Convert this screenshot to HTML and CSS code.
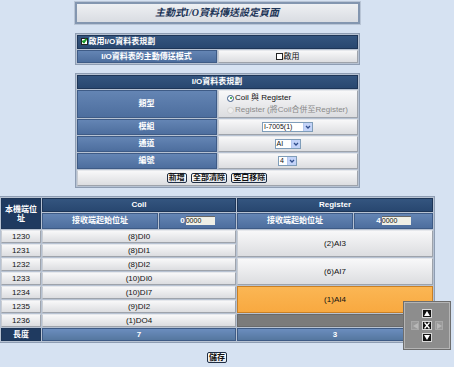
FILE: index.html
```html
<!DOCTYPE html>
<html>
<head>
<meta charset="utf-8">
<link rel="stylesheet" href="styles.css">
</head>
<body>
<div class="page">
  <div class="title">主動式I/O資料傳送設定頁面</div>

  <table class="box t1">
    <tr class="r-hd"><td class="hd left" colspan="2"><span class="cb checked"></span>啟用I/O資料表規劃</td></tr>
    <tr class="r-mode"><td class="lab w1">I/O資料表的主動傳送模式</td><td class="val"><span class="cb"></span>啟用</td></tr>
  </table>

  <table class="box t2">
    <tr class="r-hd"><td class="hd" colspan="2">I/O資料表規劃</td></tr>
    <tr class="r-type"><td class="lab w1">類型</td>
      <td class="val">
        <div class="radios">
          <div class="radio-line"><span class="rb on"></span>Coil 與 Register</div>
          <div class="radio-line dis"><span class="rb dis"></span>Register (將Coil合併至Register)</div>
        </div>
      </td></tr>
    <tr class="r-sel"><td class="lab">模組</td><td class="val"><span class="sel s1">I-7005(1)<span class="arr"></span></span></td></tr>
    <tr class="r-sel"><td class="lab">通道</td><td class="val"><span class="sel s2">AI<span class="arr"></span></span></td></tr>
    <tr class="r-sel"><td class="lab">編號</td><td class="val"><span class="sel s3">4<span class="arr"></span></span></td></tr>
    <tr class="r-sel"><td class="val" colspan="2"><span class="btn">新增</span> <span class="btn">全部清除</span> <span class="btn">空白移除</span></td></tr>
  </table>

  <table class="box t3">
    <colgroup><col style="width:40px"><col style="width:116px"><col style="width:77px"><col style="width:116px"><col style="width:79px"></colgroup>
    <tr class="h1"><td class="hd dk" rowspan="2">本機端位址</td><td class="hd" colspan="2">Coil</td><td class="hd" colspan="2">Register</td></tr>
    <tr class="h2"><td class="lab">接收端起始位址</td><td class="lab">0<span class="inp">0000</span></td><td class="lab">接收端起始位址</td><td class="lab">4<span class="inp">0000</span></td></tr>
    <tr class="d"><td class="val">1230</td><td class="val" colspan="2">(8)DI0</td><td class="val" colspan="2" rowspan="2">(2)AI3</td></tr>
    <tr class="d"><td class="val">1231</td><td class="val" colspan="2">(8)DI1</td></tr>
    <tr class="d"><td class="val">1232</td><td class="val" colspan="2">(8)DI2</td><td class="val" colspan="2" rowspan="2">(6)AI7</td></tr>
    <tr class="d"><td class="val">1233</td><td class="val" colspan="2">(10)DI0</td></tr>
    <tr class="d"><td class="val">1234</td><td class="val" colspan="2">(10)DI7</td><td class="val orange" colspan="2" rowspan="2">(1)AI4</td></tr>
    <tr class="d"><td class="val">1235</td><td class="val" colspan="2">(9)DI2</td></tr>
    <tr class="d"><td class="val">1236</td><td class="val" colspan="2">(1)DO4</td><td class="val gray" colspan="2"></td></tr>
    <tr class="d"><td class="hd dk">長度</td><td class="lab len" colspan="2">7</td><td class="lab len" colspan="2">3</td></tr>
  </table>

  <div class="save"><span class="btn">儲存</span></div>
</div>

<div class="nav">
  <div class="nrow"><span class="nb"><svg width="6" height="5" viewBox="0 0 6 5"><path d="M3 0L6 5H0Z" fill="#fff"/></svg></span></div>
  <div class="nrow">
    <span class="nb off"><svg width="5" height="6" viewBox="0 0 5 6"><path d="M0 3L5 0V6Z" fill="#b8b8b8"/></svg></span>
    <span class="nb"><svg width="6" height="7" viewBox="0 0 6 7"><path d="M0.5 0.5L5.5 6.5M5.5 0.5L0.5 6.5" stroke="#fff" stroke-width="1.4"/></svg></span>
    <span class="nb off"><svg width="5" height="6" viewBox="0 0 5 6"><path d="M5 3L0 0V6Z" fill="#b8b8b8"/></svg></span>
  </div>
  <div class="nrow"><span class="nb"><svg width="6" height="5" viewBox="0 0 6 5"><path d="M3 5L6 0H0Z" fill="#fff"/></svg></span></div>
</div>
</body>
</html>
```

FILE: styles.css
```css
html, body { margin: 0; padding: 0; }
body {
  background: #d6e2f2;
  font-family: "Liberation Sans", "Noto Sans CJK TC", Arial, sans-serif;
  font-size: 8px;
  color: #111;
  width: 454px;
  height: 367px;
  overflow: hidden;
  position: relative;
}
.page {
  width: 434px;
  padding-top: 2px;
  display: flex;
  flex-direction: column;
  align-items: center;
}
.title {
  box-sizing: border-box;
  width: 285px;
  height: 22px;
  border: 2px solid #8396b0;
  outline: 1px solid #b9c5d6;
  background: linear-gradient(#eef0f3, #d9dce2);
  color: #1e3658;
  font-family: "Liberation Serif", "Noto Sans CJK TC", serif;
  font-style: italic;
  font-weight: bold;
  font-size: 10px;
  line-height: 18px;
  text-align: center;
}
.box {
  border-collapse: separate;
  border-spacing: 1px;
  background: #b7c2d2;
  border: 1px solid #8e9db3;
  padding: 0;
  table-layout: fixed;
}
.box td {
  box-sizing: border-box;
  padding: 0;
  text-align: center;
  vertical-align: middle;
  white-space: nowrap;
  line-height: 10px;
  font-size: 8px;
}
.t1 { width: 285px; margin-top: 9px; }
.t2 { width: 285px; margin-top: 8px; }
.t3 { width: 428px; margin-top: 8px; }
.hd {
  background: linear-gradient(#34557f, #284770);
  color: #fff;
  font-weight: bold;
  border: 1px solid #1d3557;
}
.hd.left { text-align: left !important; padding-left: 3px !important; }
.hd.dk { background: #1f3a60; }
.lab {
  background: linear-gradient(#6485b4, #4d6e9e);
  color: #fff;
  font-weight: bold;
  border: 1px solid #3e5b86;
}
.w1 { width: 114px; }
.val {
  background: linear-gradient(#f8f8f9, #dcdde0);
  border: 1px solid #9ea3ab;
  border-top-color: #e6e8ec;
  border-left-color: #c8ccd2;
  color: #111;
}
.r-hd td { height: 14px; }
.r-mode td { height: 13px; }
.r-type td { height: 28px; }
.r-sel td { height: 16px; }
.cb {
  display: inline-block;
  box-sizing: border-box;
  width: 7px;
  height: 7px;
  border: 1px solid #222;
  background: #fff;
  vertical-align: -1px;
  margin-right: 1px;
  position: relative;
}
.cb.checked::after {
  content: "";
  position: absolute;
  left: 1px; top: -1px;
  width: 1px; height: 3px;
  border: solid #1a9a2a;
  border-width: 0 2px 2px 0;
  transform: rotate(40deg);
}
.radios { display: inline-flex; flex-direction: column; align-items: flex-start; gap: 2px; }
.radio-line { display: flex; align-items: center; line-height: 10px; }
.radio-line.dis { color: #8a8a8a; }
.rb {
  display: inline-block;
  box-sizing: border-box;
  width: 7px; height: 7px;
  border-radius: 50%;
  border: 1px solid #3a5a88;
  background: #fff;
  margin-right: 1px;
  position: relative;
}
.rb.on::after {
  content: ""; position: absolute; left: 1.5px; top: 1.5px; width: 2px; height: 2px; border-radius: 50%; background: #1f9a2a;
}
.rb.dis { border-color: #d4d4d4; background: #eeeeee; }
.sel {
  display: inline-flex;
  align-items: center;
  justify-content: space-between;
  box-sizing: border-box;
  height: 10px;
  border: 1px solid #7f9db9;
  background: #fff;
  font-size: 7px;
  line-height: 8px;
  padding-left: 1px;
  vertical-align: middle;
}
.s1 { width: 51px; }
.s2 { width: 26px; }
.s3 { width: 19px; }
.arr {
  width: 8px; height: 8px;
  background: #c3d3f8 url("data:image/svg+xml,%3Csvg xmlns='http://www.w3.org/2000/svg' width='8' height='8'%3E%3Cpath d='M2 3L4 5L6 3' stroke='%23304d8c' stroke-width='1.3' fill='none'/%3E%3C/svg%3E") center no-repeat;
  border-left: 1px solid #b5c8ef;
}
.btn {
  display: inline-block;
  border: 1px solid #1e2d44;
  border-radius: 2px;
  background: linear-gradient(#ffffff, #e6e9ee);
  font-size: 8px;
  line-height: 8px;
  padding: 0 1px;
  margin: 0 1px;
  color: #111;
  font-weight: bold;
  vertical-align: middle;
}
.t3 .h1 td { height: 14px; }
.t3 .h2 td { height: 16px; }
.t3 .d td { height: 13px; }
.t3 .hd.dk { line-height: 9px; white-space: normal; }
.inp {
  display: inline-block;
  width: 29px;
  height: 8px;
  background: #efefe6;
  color: #111;
  font-weight: normal;
  font-size: 7px;
  line-height: 8px;
  text-align: left;
  vertical-align: middle;
  border-top: 1px solid #666;
  margin-left: 1px;
}
.orange { background: linear-gradient(#fbb654, #f8a940); border-color: #c98026; }
.gray { background: #7b7b7b; border-color: #6a6a6a; }
.len { background: linear-gradient(#6b8dbe, #55779f); }
.save { margin-top: 9px; }
.save .btn { margin: 0; line-height: 9px; }
.nav {
  position: absolute;
  left: 404px;
  top: 302px;
  box-sizing: border-box;
  width: 46px;
  height: 47px;
  background: #8d8d8d;
  border: 1px solid #b4b4b4;
  outline: 1px solid #6e6e6e;
  display: flex;
  flex-direction: column;
  align-items: center;
  justify-content: center;
  gap: 3px;
}
.nrow { display: flex; gap: 3px; align-items: center; }
.nb {
  box-sizing: border-box;
  width: 10px; height: 9px;
  background: #111;
  border: 1px solid #d8d8d8;
  display: flex;
  align-items: center;
  justify-content: center;
}
.nb.off { background: #9a9a9a; border-color: #a8a8a8; width: 8px; }
```
